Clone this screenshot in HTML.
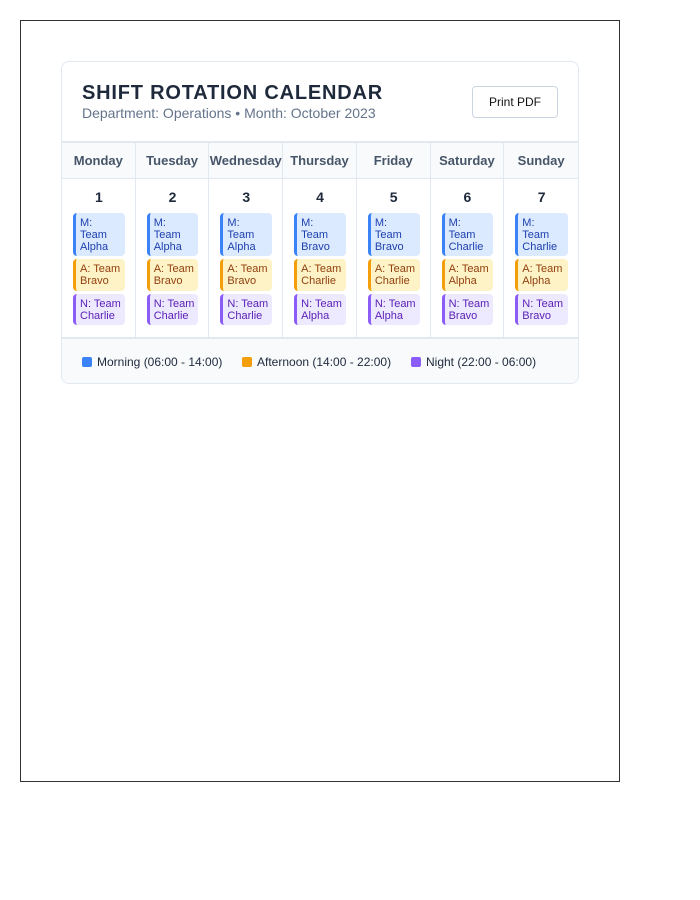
<!DOCTYPE html>
<html><head><style>
*{box-sizing:border-box;margin:0;padding:0}
body{width:700px;height:900px;background:#fff;font-family:"Liberation Sans",Arial,sans-serif;position:relative}
.frame{position:absolute;left:20px;top:20px;width:600px;height:762px;border:1px solid #333}
.card{position:absolute;left:61px;top:61px;width:518px;height:323px;border:1px solid #e2e8f0;border-radius:8px;overflow:hidden;background:#fff}
h1{position:absolute;left:20px;top:20px;font-size:20px;letter-spacing:0.8px;color:#1e293b;font-weight:bold}
.sub{position:absolute;left:20px;top:43px;font-size:14px;color:#64748b}
.btn{position:absolute;left:410px;top:24px;width:86px;height:32px;border:1px solid #cbd5e1;border-radius:4px;font-size:12px;color:#111;text-align:center;line-height:30px}
.grid{position:absolute;left:0;top:79px;width:516px;border-top:2px solid #e2e8f0;display:grid;grid-template-columns:repeat(7,1fr)}
.hd{height:36px;background:#f8fafc;border-right:1px solid #e2e8f0;border-bottom:1px solid #e2e8f0;font-size:13px;font-weight:bold;color:#475569;text-align:center;line-height:35px;white-space:nowrap}
.cell{height:160px;border-right:1px solid #e2e8f0;border-bottom:2px solid #e2e8f0;padding:0 10px 0 11px}
.hd:nth-child(7),.cell:nth-child(14){border-right:none}
.num{font-size:14px;font-weight:bold;color:#1e293b;text-align:center;margin-top:10px;height:24px;line-height:17px}
.s{font-size:11px;line-height:12px;border-left:3px solid;border-radius:4px;padding:4px 1px 3px 4px;margin-bottom:3px;white-space:nowrap;overflow:hidden}
.m{background:#dbeafe;border-color:#3b82f6;color:#1e40af;height:43px}
.a{background:#fef3c7;border-color:#f59e0b;color:#92400e;height:32px}
.n{background:#ede9fe;border-color:#8b5cf6;color:#5b21b6;height:31px}
.leg{position:absolute;left:0;top:277px;width:516px;height:45px;background:#f8fafc;font-size:12px;color:#1e293b}
.li{position:absolute;top:16px;white-space:nowrap}
.li i{display:inline-block;width:10px;height:10px;border-radius:2px;margin-right:5px;vertical-align:-1px}
</style></head><body>
<div class="frame"></div>
<div class="card">
<h1>SHIFT ROTATION CALENDAR</h1>
<div class="sub">Department: Operations • Month: October 2023</div>
<div class="btn">Print PDF</div>
<div class="grid">
<div class="hd">Monday</div><div class="hd">Tuesday</div><div class="hd">Wednesday</div><div class="hd">Thursday</div><div class="hd">Friday</div><div class="hd">Saturday</div><div class="hd">Sunday</div>
<div class="cell"><div class="num">1</div><div class="s m">M:<br>Team<br>Alpha</div><div class="s a">A: Team<br>Bravo</div><div class="s n">N: Team<br>Charlie</div></div>
<div class="cell"><div class="num">2</div><div class="s m">M:<br>Team<br>Alpha</div><div class="s a">A: Team<br>Bravo</div><div class="s n">N: Team<br>Charlie</div></div>
<div class="cell"><div class="num">3</div><div class="s m">M:<br>Team<br>Alpha</div><div class="s a">A: Team<br>Bravo</div><div class="s n">N: Team<br>Charlie</div></div>
<div class="cell"><div class="num">4</div><div class="s m">M:<br>Team<br>Bravo</div><div class="s a">A: Team<br>Charlie</div><div class="s n">N: Team<br>Alpha</div></div>
<div class="cell"><div class="num">5</div><div class="s m">M:<br>Team<br>Bravo</div><div class="s a">A: Team<br>Charlie</div><div class="s n">N: Team<br>Alpha</div></div>
<div class="cell"><div class="num">6</div><div class="s m">M:<br>Team<br>Charlie</div><div class="s a">A: Team<br>Alpha</div><div class="s n">N: Team<br>Bravo</div></div>
<div class="cell"><div class="num">7</div><div class="s m">M:<br>Team<br>Charlie</div><div class="s a">A: Team<br>Alpha</div><div class="s n">N: Team<br>Bravo</div></div>
</div>
<div class="leg">
<div class="li" style="left:20px"><i style="background:#3b82f6"></i>Morning (06:00 - 14:00)</div>
<div class="li" style="left:180px"><i style="background:#f59e0b"></i>Afternoon (14:00 - 22:00)</div>
<div class="li" style="left:349px"><i style="background:#8b5cf6"></i>Night (22:00 - 06:00)</div>
</div>
</div>
</body></html>
